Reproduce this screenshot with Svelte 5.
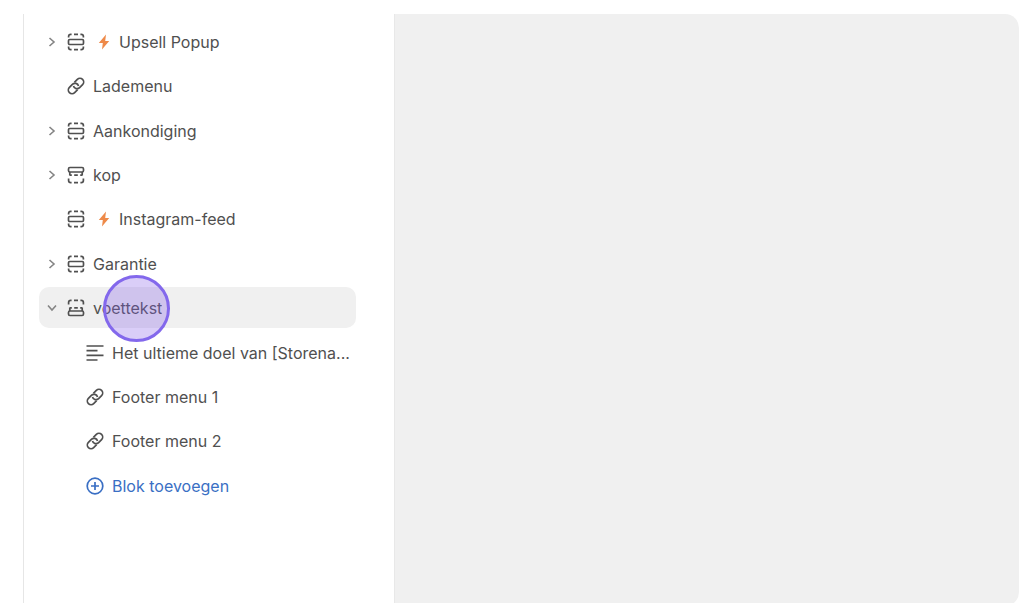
<script lang="ts">
  type Row = {
    label: string;
    icon: 'section' | 'header' | 'footer' | 'link' | 'text';
    app?: boolean;
    expandable?: boolean;
    open?: boolean;
    children?: Row[];
  };

  const groups: Row[][] = $state([
    [
      { label: 'Upsell Popup', icon: 'section', app: true, expandable: true },
      { label: 'Lademenu', icon: 'link' },
    ],
    [
      { label: 'Aankondiging', icon: 'section', expandable: true },
      { label: 'kop', icon: 'header', expandable: true },
      { label: 'Instagram-feed', icon: 'section', app: true },
    ],
    [
      { label: 'Garantie', icon: 'section', expandable: true },
      {
        label: 'voettekst',
        icon: 'footer',
        expandable: true,
        open: true,
        children: [
          { label: 'Het ultieme doel van [Storena...', icon: 'text' },
          { label: 'Footer menu 1', icon: 'link' },
          { label: 'Footer menu 2', icon: 'link' },
        ],
      },
    ],
  ]);

  let selected = $state('voettekst');

  function select(row: Row) {
    selected = row.label;
    if (row.expandable) row.open = !row.open;
  }
</script>

{#snippet icon(name: string)}
  <svg class="icon" viewBox="0 0 18 18" aria-hidden="true">
    {#if name === 'section'}
      <rect x="1.5" y="6.5" width="15" height="5" rx="1.2" />
      <path d="M1.6 4.6V3.6Q1.6 1.4 3.8 1.4H4.6M7 1.4h4M13.4 1.4h.8q2.2 0 2.2 2.2v1M1.6 13.4v1q0 2.2 2.2 2.2h.8M7 16.6h4M13.4 16.6h.8q2.2 0 2.2-2.2v-1" />
    {:else if name === 'header'}
      <rect x="1.5" y="1.5" width="15" height="4.5" rx="1.4" />
      <path d="M2.8 6v3.6M15.2 6v3.6M2.8 9.2h2M7.2 9.2h3.6M13.2 9.2h2M1.6 12.4v2q0 2.2 2.2 2.2h.8M7 16.6h4M13.4 16.6h.8q2.2 0 2.2-2.2v-2" />
    {:else if name === 'footer'}
      <rect x="1.5" y="12" width="15" height="4.5" rx="1.4" />
      <path d="M2.8 12V8.4M15.2 12V8.4M2.8 8.8h2M7.2 8.8h3.6M13.2 8.8h2M1.6 5.6v-2Q1.6 1.4 3.8 1.4h.8M7 1.4h4M13.4 1.4h.8q2.2 0 2.2 2.2v2" />
    {:else if name === 'link'}
      <g transform="rotate(-45 9 9)">
        <path d="M7.6 12.7H3.4a3.7 3.7 0 0 1 0-7.4h4.2a3.7 3.7 0 0 1 3.2 5.5" />
        <path d="M10.4 5.3h4.2a3.7 3.7 0 0 1 0 7.4h-4.2a3.7 3.7 0 0 1-3.2-5.5" />
      </g>
    {:else if name === 'text'}
      <path d="M.5 2h17M.5 6.7h11M.5 11.3h17M.5 16h11" />
    {:else}
      <circle cx="9" cy="9" r="7.8" />
      <path d="M9 5v8M5 9h8" />
    {/if}
  </svg>
{/snippet}

{#snippet rowButton(row: Row)}
  <button
    class="row"
    class:selected={selected === row.label}
    aria-expanded={row.expandable ? !!row.open : undefined}
    onclick={() => select(row)}
  >
    <span class="toggle">
      {#if row.expandable}
        <svg class="chevron" class:open={row.open} viewBox="0 0 10 10" aria-hidden="true">
          <path d="M2.5 1 7 5 2.5 9" />
        </svg>
      {/if}
    </span>
    {@render icon(row.icon)}
    {#if row.app}
      <svg class="bolt" viewBox="0 0 12 16" aria-hidden="true">
        <path d="M8 .5.8 9h4L4 15.5 11.2 7h-4z" />
      </svg>
    {/if}
    <span class="label">{row.label}</span>
    {#if row.label === 'voettekst'}
      <span class="pointer"></span>
    {/if}
  </button>
{/snippet}

<div class="editor">
  <nav class="sidebar" aria-label="Secties">
    {#each groups as group}
      <ul class="list">
        {#each group as row}
          <li>
            {@render rowButton(row)}
            {#if row.open && row.children}
              <ul class="list children">
                {#each row.children as child}
                  <li>{@render rowButton(child)}</li>
                {/each}
              </ul>
              <button class="row add">
                <span class="toggle"></span>
                {@render icon('plus')}
                <span class="label">Blok toevoegen</span>
              </button>
            {/if}
          </li>
        {/each}
      </ul>
    {/each}
  </nav>
  <main class="preview"></main>
</div>

<style>
  :global(body) {
    margin: 0;
    background: #fff;
  }

  .editor {
    box-sizing: border-box;
    display: flex;
    height: 100vh;
    padding: 14px 5px 0 23px;
    overflow: hidden;
    font-family: Inter, "Liberation Sans", sans-serif;
    font-size: 16px;
    color: #505050;
  }

  .sidebar {
    box-sizing: border-box;
    flex: none;
    width: 371px;
    display: flex;
    flex-direction: column;
    gap: 4px;
    padding: 7px 38px 0 15px;
    border-left: 1px solid #e6e6e6;
  }

  .list {
    display: flex;
    flex-direction: column;
    gap: 3px;
    margin: 0;
    padding: 0;
    list-style: none;
  }

  .children {
    margin: 4px 0;
  }

  .row {
    position: relative;
    box-sizing: border-box;
    display: flex;
    align-items: center;
    width: 100%;
    height: 41px;
    padding: 0 0 0 8px;
    border: 0;
    border-radius: 10px;
    background: none;
    font: inherit;
    line-height: 20px;
    color: inherit;
    text-align: left;
    cursor: pointer;
  }

  .row.selected {
    background: #f0f0f0;
  }

  .children .row,
  .add {
    padding-left: 27px;
  }

  .add {
    color: #3a6fc4;
  }

  .toggle {
    flex: none;
    display: flex;
    width: 20px;
  }

  .chevron {
    width: 10px;
    height: 10px;
    fill: none;
    stroke: #858585;
    stroke-width: 1.6;
  }

  .chevron.open {
    transform: rotate(90deg);
  }

  .icon {
    flex: none;
    width: 18px;
    height: 18px;
    margin-right: 8px;
    fill: none;
    stroke: currentColor;
    stroke-width: 1.7;
  }

  .bolt {
    flex: none;
    width: 12px;
    height: 16px;
    margin: 0 9px 0 5px;
    fill: #ee8a49;
  }

  .label {
    overflow: hidden;
    text-overflow: ellipsis;
    white-space: nowrap;
  }

  .pointer {
    position: absolute;
    top: -12px;
    left: 64px;
    box-sizing: border-box;
    width: 67px;
    height: 67px;
    border: 3px solid #8368ec;
    border-radius: 50%;
    background: rgba(131, 92, 232, 0.3);
    pointer-events: none;
  }

  .preview {
    flex: 1;
    box-sizing: border-box;
    margin-bottom: -3px;
    border-left: 1px solid #e8e8e8;
    border-radius: 0 14px 14px 0;
    background: #f0f0f0;
  }
</style>
